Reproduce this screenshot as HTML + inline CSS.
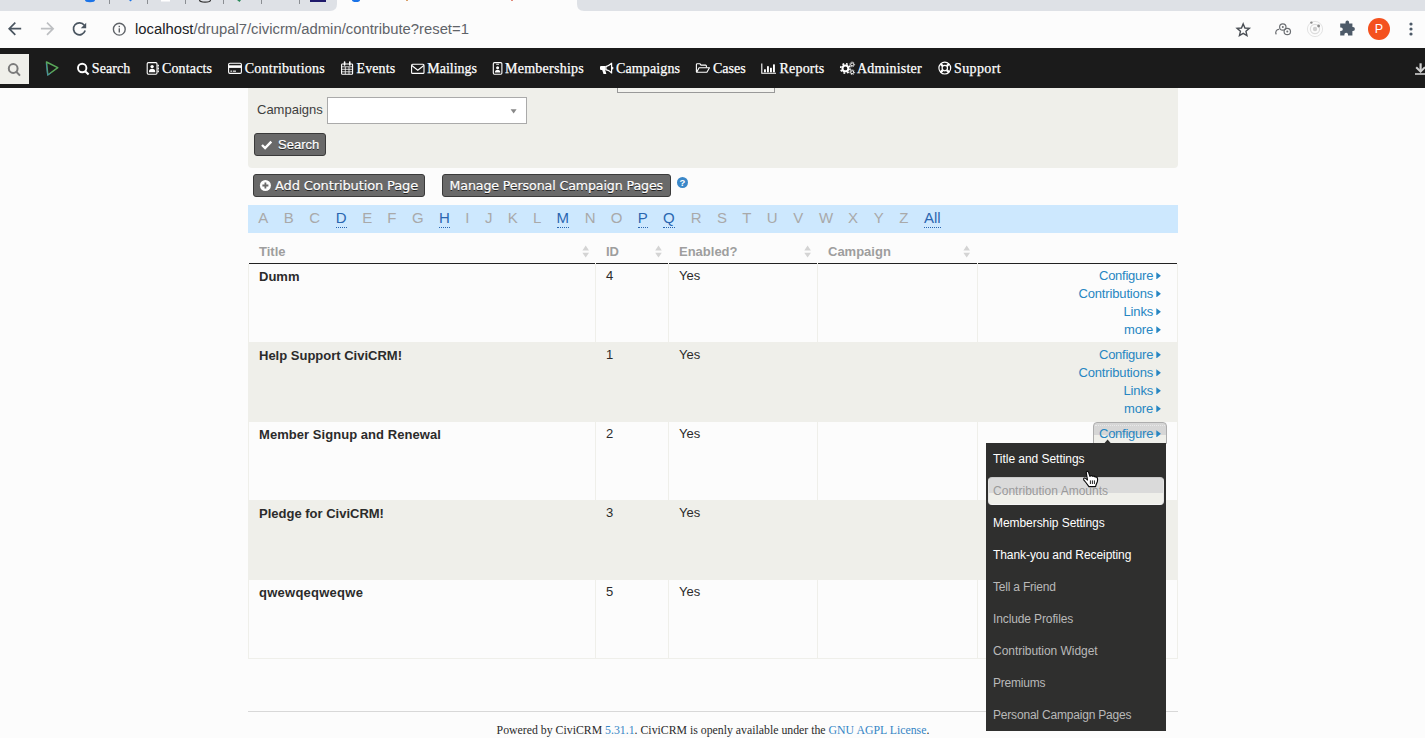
<!DOCTYPE html>
<html><head><meta charset="utf-8"><title>CiviCRM</title>
<style>
*{box-sizing:border-box;margin:0;padding:0}
html,body{width:1425px;height:738px;overflow:hidden;background:#fcfcfc;font-family:"Liberation Sans",sans-serif;}
.abs{position:absolute}
#tabs{left:0;top:0;width:1425px;height:11px;background:#dee1e6}
#tabact{left:337px;top:-10px;width:240px;height:21px;background:#fcfcfc;border-radius:8px 8px 0 0}
#url{left:135px;top:20px;font-size:14.82px;line-height:18px;color:#5f6368;white-space:nowrap}
#url b{font-weight:normal;color:#202124}
#nav{left:0;top:48px;width:1425px;height:40px;background:#1b1b1b}
#qs{left:0;top:54px;width:29px;height:30px;background:#efefea}
.ni{position:absolute;top:60px;font-family:"Liberation Serif",serif;font-size:14px;line-height:18px;color:#fff;white-space:nowrap;-webkit-text-stroke:0.25px #fff}
#panel{left:248px;top:88px;width:930px;height:80px;background:#efefea;border-radius:0 0 4px 4px}
#lbl{left:257px;top:101px;font-size:13px;line-height:17px;color:#3e3e3e}
#sel{left:327px;top:97px;width:200px;height:27px;background:#fff;border:1px solid #aaa}
.btn{-webkit-text-stroke:0.2px #fff;position:absolute;background:#696969;border:1px solid #3a3a3a;border-radius:3px;color:#fff;white-space:nowrap;text-shadow:0 1px 0 #222}
#bsearch{left:254px;top:133px;width:72px;height:23px;font-size:13px;line-height:21px;padding-left:23px}
#badd{left:253px;top:174px;width:172px;height:23px;font-family:"DejaVu Sans",sans-serif;font-size:13px;letter-spacing:-0.12px;line-height:21px;padding-left:21px}
#bman{left:442px;top:174px;width:229px;height:23px;font-family:"DejaVu Sans",sans-serif;font-size:12.6px;letter-spacing:-0.1px;line-height:21px;padding-left:6.5px}
#alpha{left:248px;top:205px;width:930px;height:28px;background:#cde8fe}
.al{position:absolute;top:209px;font-size:15px;line-height:18px;color:#a9a9a9}
.al.on{color:#2a66b0;border-bottom:1px dotted #2a66b0;}
.th{position:absolute;top:244px;font-size:13px;line-height:16px;font-weight:bold;color:#9e9e9e}
#tbl{left:248px;top:264px;width:930px;height:395px;background:#efefea}
.c{position:absolute;height:78px;background:#fcfcfc}
.tt{position:absolute;left:259px;font-size:13px;line-height:16px;font-weight:bold;color:#2b2b2b;white-space:nowrap}
.td{position:absolute;font-size:13px;line-height:16px;color:#2b2b2b}
.lk{position:absolute;font-size:13px;line-height:16px;color:#2786c2;text-align:right;right:264.1px;white-space:nowrap;letter-spacing:-0.15px}
.lk i{display:inline-block;width:4.6px;height:7.2px;background:#2786c2;clip-path:polygon(0 0,100% 50%,0 100%);margin-left:3.2px;margin-right:0;vertical-align:0.6px;letter-spacing:0}
#cfg{left:1093px;top:422px;width:74px;height:22px;border:1px solid #adadad;border-radius:4px 4px 0 0;background:linear-gradient(#d6d6d6 0,#d6d6d6 58%,#efefea 58%,#efefea 100%)}
#menu{left:986px;top:443px;width:180px;height:288px;background:#2f2f2e}
.mi{position:absolute;left:993px;font-size:12px;line-height:15px;color:#fff;white-space:nowrap}
.mi.d{color:#b9b9b9}
.mi.h{color:#9a9a9a}
#hov{left:988px;top:477px;width:176px;height:28px;border:1px solid;border-color:#c9c9c9 #e3e3e3 #f6f6f6 #e3e3e3;border-radius:4px;background:linear-gradient(#dadada 0,#dadada 57%,#efefea 57%,#efefea 100%)}
#foot{left:248px;top:711px;width:930px;height:1px;background:#d8d8d8}
#ftxt{left:248px;width:930px;top:723px;text-align:center;font-family:"Liberation Serif",serif;font-size:11.8px;line-height:15px;color:#2b2b2b}
#ftxt span{color:#3585c5}
</style></head><body>
<div id="tabs" class="abs"></div><div id="tabact" class="abs"></div>
<div id="url" class="abs"><b>localhost</b>/drupal7/civicrm/admin/contribute?reset=1</div>
<div id="nav" class="abs"></div>
<div id="qs" class="abs"></div>
<div class="ni" style="left:91.8px;letter-spacing:0.07px">Search</div>
<div class="ni" style="left:162.0px;letter-spacing:0.14px">Contacts</div>
<div class="ni" style="left:244.7px;letter-spacing:0.26px">Contributions</div>
<div class="ni" style="left:356.5px;letter-spacing:0.10px">Events</div>
<div class="ni" style="left:427.3px;letter-spacing:-0.01px">Mailings</div>
<div class="ni" style="left:505.0px;letter-spacing:0.26px">Memberships</div>
<div class="ni" style="left:616.0px;letter-spacing:0.13px">Campaigns</div>
<div class="ni" style="left:712.9px;letter-spacing:0.01px">Cases</div>
<div class="ni" style="left:779.6px;letter-spacing:0.18px">Reports</div>
<div class="ni" style="left:856.9px;letter-spacing:0.20px">Administer</div>
<div class="ni" style="left:954.0px;letter-spacing:0.39px">Support</div>

<div id="panel" class="abs"></div>
<div class="abs" style="left:617px;top:88px;width:158px;height:5px;border:1px solid #999;border-top:none;background:#f3f3ef"></div>
<div id="lbl" class="abs">Campaigns</div>
<div id="sel" class="abs"></div>
<div id="bsearch" class="btn">Search</div>
<div id="badd" class="btn">Add Contribution Page</div>
<div id="bman" class="btn">Manage Personal Campaign Pages</div>
<div id="alpha" class="abs"></div>
<span class="al" style="left:258.3px">A</span><span class="al" style="left:283.8px">B</span><span class="al" style="left:309.2px">C</span><span class="al on" style="left:335.8px">D</span><span class="al" style="left:362.3px">E</span><span class="al" style="left:387.3px">F</span><span class="al" style="left:411.9px">G</span><span class="al on" style="left:438.9px">H</span><span class="al" style="left:465.3px">I</span><span class="al" style="left:485.0px">J</span><span class="al" style="left:507.8px">K</span><span class="al" style="left:533.1px">L</span><span class="al on" style="left:556.5px">M</span><span class="al" style="left:584.7px">N</span><span class="al" style="left:610.8px">O</span><span class="al on" style="left:637.8px">P</span><span class="al on" style="left:663.1px">Q</span><span class="al" style="left:690.7px">R</span><span class="al" style="left:717.0px">S</span><span class="al" style="left:742.2px">T</span><span class="al" style="left:766.8px">U</span><span class="al" style="left:793.3px">V</span><span class="al" style="left:819.1px">W</span><span class="al" style="left:848.1px">X</span><span class="al" style="left:873.7px">Y</span><span class="al" style="left:899.2px">Z</span><span class="al on" style="left:924px">All</span>
<div class="th" style="left:259px">Title</div>
<div class="th" style="left:606px">ID</div>
<div class="th" style="left:679px">Enabled?</div>
<div class="th" style="left:828px">Campaign</div>
<div class="abs" style="left:249px;top:263px;width:928px;height:1px;background:#222"></div>
<div id="tbl" class="abs"></div>
<div class="abs" style="left:595px;top:263px;width:1px;height:1px;background:#f4f4f2"></div><div class="abs" style="left:668px;top:263px;width:1px;height:1px;background:#f4f4f2"></div><div class="abs" style="left:817px;top:263px;width:1px;height:1px;background:#f4f4f2"></div><div class="abs" style="left:977px;top:263px;width:1px;height:1px;background:#f4f4f2"></div>
<div class="c" style="left:249px;top:264px;width:346px"></div><div class="c" style="left:596px;top:264px;width:72px"></div><div class="c" style="left:669px;top:264px;width:148px"></div><div class="c" style="left:818px;top:264px;width:159px"></div><div class="c" style="left:978px;top:264px;width:199px"></div>
<div class="c" style="left:249px;top:422px;width:346px"></div><div class="c" style="left:596px;top:422px;width:72px"></div><div class="c" style="left:669px;top:422px;width:148px"></div><div class="c" style="left:818px;top:422px;width:159px"></div><div class="c" style="left:978px;top:422px;width:199px"></div>
<div class="c" style="left:249px;top:580px;width:346px"></div><div class="c" style="left:596px;top:580px;width:72px"></div><div class="c" style="left:669px;top:580px;width:148px"></div><div class="c" style="left:818px;top:580px;width:159px"></div><div class="c" style="left:978px;top:580px;width:199px"></div>

<div class="tt" style="top:269px;letter-spacing:0px">Dumm</div><div class="td" style="left:606px;top:268px">4</div><div class="td" style="left:679px;top:268px">Yes</div>
<div class="lk" style="top:268px;letter-spacing:-0.25px">Configure<i></i></div><div class="lk" style="top:286px">Contributions<i></i></div><div class="lk" style="top:304px">Links<i></i></div><div class="lk" style="top:322px">more<i></i></div>
<div class="tt" style="top:348px;letter-spacing:0px">Help Support CiviCRM!</div><div class="td" style="left:606px;top:347px">1</div><div class="td" style="left:679px;top:347px">Yes</div>
<div class="lk" style="top:347px;letter-spacing:-0.25px">Configure<i></i></div><div class="lk" style="top:365px">Contributions<i></i></div><div class="lk" style="top:383px">Links<i></i></div><div class="lk" style="top:401px">more<i></i></div>
<div class="tt" style="top:427px;letter-spacing:0.05px">Member Signup and Renewal</div><div class="td" style="left:606px;top:426px">2</div><div class="td" style="left:679px;top:426px">Yes</div>
<div class="tt" style="top:506px;letter-spacing:0px">Pledge for CiviCRM!</div><div class="td" style="left:606px;top:505px">3</div><div class="td" style="left:679px;top:505px">Yes</div>
<div class="tt" style="top:585px;letter-spacing:0.25px">qwewqeqweqwe</div><div class="td" style="left:606px;top:584px">5</div><div class="td" style="left:679px;top:584px">Yes</div>

<div id="foot" class="abs"></div>
<div id="cfg" class="abs"></div><div class="abs" style="left:1095px;top:425px;width:70px;height:0;border-top:1px dotted #e9e9e9"></div>
<div class="lk" style="top:426px;letter-spacing:-0.25px">Configure<i></i></div>
<div id="menu" class="abs"></div>
<div id="hov" class="abs"></div>
<div class="mi" style="top:452px;letter-spacing:-0.04px">Title and Settings</div>
<div class="mi h" style="top:484px;letter-spacing:0.02px">Contribution Amounts</div>
<div class="mi" style="top:516px;letter-spacing:-0.06px">Membership Settings</div>
<div class="mi" style="top:548px;letter-spacing:-0.075px">Thank-you and Receipting</div>
<div class="mi d" style="top:580px;letter-spacing:-0.21px">Tell a Friend</div>
<div class="mi d" style="top:612px;letter-spacing:-0.12px">Include Profiles</div>
<div class="mi d" style="top:644px;letter-spacing:-0.04px">Contribution Widget</div>
<div class="mi d" style="top:676px;letter-spacing:-0.2px">Premiums</div>
<div class="mi d" style="top:708px;letter-spacing:-0.19px">Personal Campaign Pages</div>

<div id="ftxt" class="abs">Powered by CiviCRM <span>5.31.1</span>. CiviCRM is openly available under the <span>GNU AGPL License</span>.</div>
<svg class="abs" style="left:0;top:0;pointer-events:none" width="1425" height="738" viewBox="0 0 1425 738">
<!-- tab strip bits -->
<path d="M330 11Q337 11 337 4V11zM584 11Q577 11 577 4V11z" fill="#fcfcfc"/>
<g stroke="#8b8e93" stroke-width="1"><path d="M109.5 0V4M147.5 0V4M185.5 0V4M223.5 0V4M261.5 0V4M299.5 0V4"/></g>
<path d="M85 0h10a5 2.2 0 0 1-10 0z" fill="#1a73e8"/>
<path d="M129 0h3l-1.5 1.5z" fill="#1a73e8"/>
<rect x="161" y="0" width="9" height="1.5" fill="#fff"/>
<path d="M199.5 0a5.5 2.2 0 0 0 11 0" fill="none" stroke="#333" stroke-width="1.2"/>
<path d="M237 0h4l-1.5 2z" fill="#2a8a5a"/>
<rect x="310" y="0" width="16" height="2" fill="#1f1a6b"/>
<path d="M352 0h8a4 2 0 0 1-8 0z" fill="#1a73e8"/>
<rect x="406" y="0" width="2" height="1" fill="#d9a06a"/><rect x="511" y="0" width="2" height="1" fill="#e28a7a"/>
<!-- toolbar -->
<g fill="none" stroke="#4a5560" stroke-width="1.7" stroke-linecap="butt" stroke-linejoin="miter">
<path d="M21.2 28.7H10M15.3 22.6L9.2 28.7L15.3 34.8"/>
<path d="M40.9 28.7H52.2M47 22.6L53.1 28.7L47 34.8" stroke="#bdbfc2"/>
<path d="M84.3 25.2A6 6 0 1 0 85.2 30.6" />
</g>
<path d="M86.2 22.8V28.2H80.8z" fill="#4a5560"/>
<circle cx="119.3" cy="29.2" r="5.9" fill="none" stroke="#5f6368" stroke-width="1.4"/>
<rect x="118.6" y="28.3" width="1.4" height="4.2" fill="#5f6368"/><rect x="118.6" y="25.8" width="1.4" height="1.4" fill="#5f6368"/>
<!-- star -->
<path d="M1243.2 23.9l1.75 4.1 4.4.4-3.4 2.9 1 4.3-3.75-2.3-3.75 2.3 1-4.3-3.4-2.9 4.4-.4z" fill="none" stroke="#4a4f55" stroke-width="1.4" stroke-linejoin="miter"/>
<!-- cloud ext -->
<g fill="none" stroke="#6b6e72" stroke-width="1.2">
<circle cx="1282.8" cy="27" r="3.2"/><circle cx="1287.3" cy="31.5" r="3.2"/><path d="M1276.3 34.3a3.2 3.2 0 0 1 2.8-5"/>
</g>
<circle cx="1282.8" cy="27" r="1" fill="#6b6e72"/><circle cx="1287.3" cy="31.5" r="1" fill="#6b6e72"/>
<!-- circle ext -->
<circle cx="1315" cy="29" r="7.6" fill="none" stroke="#dcdcdc" stroke-width="0.8"/>
<circle cx="1315" cy="29" r="4.6" fill="none" stroke="#dcdcdc" stroke-width="1.2"/>
<circle cx="1315" cy="29" r="2.2" fill="#d0d0d0"/>
<circle cx="1311.4" cy="22.6" r="1.2" fill="#8a8a8a"/><circle cx="1318.6" cy="26" r="1.4" fill="#8a8a8a"/>
<!-- puzzle -->
<path d="M1345.5 22.3a1.8 1.8 0 0 1 3.6 0v1.2h3.3v3.6h.6a1.9 1.9 0 0 1 0 3.8h-.6v4.6h-4.4v-.9a1.8 1.8 0 0 0-3.6 0v.9h-4.2v-4.4h.8a1.8 1.8 0 0 0 0-3.6h-.8v-4h5.3z" fill="#4d5a68"/>
<!-- avatar -->
<circle cx="1379" cy="29" r="11" fill="#f4511e"/>
<text x="1379" y="33.3" font-family="Liberation Sans, sans-serif" font-size="12.5" fill="#fff" text-anchor="middle">P</text>
<circle cx="1411" cy="24" r="1.6" fill="#4d5a68"/><circle cx="1411" cy="29" r="1.6" fill="#4d5a68"/><circle cx="1411" cy="34" r="1.6" fill="#4d5a68"/>
<!-- civicrm nav -->
<g fill="none" stroke="#7b7b7b" stroke-width="2"><circle cx="13.2" cy="68.5" r="4.4"/><path d="M16.3 71.8L20 75.6" stroke-linecap="butt"/></g>
<path d="M46.5 62L57.8 67.6L47.8 75z" fill="none" stroke="#5aa85a" stroke-width="1.5" stroke-linejoin="round"/>
<path d="M46.2 63.5L47.6 75.2L51 73" fill="none" stroke="#3f7fbf" stroke-width="0.9" opacity=".8"/>
<!-- download icon -->
<g stroke="#d0d0d0" fill="none"><path d="M1420.6 63.3V70" stroke-width="2.2"/><path d="M1416.2 67.2L1420.6 71.6L1425 67.2" stroke-width="2"/><path d="M1415 74H1425" stroke-width="1.6"/></g>
<!-- nav icons -->
<g fill="none" stroke="#fff">
<!-- search -->
<circle cx="82.2" cy="68" r="4.2" stroke-width="1.9"/><path d="M85.2 71.2L88.6 74.6" stroke-width="2.1"/>
<!-- contacts -->
<rect x="147.2" y="62.6" width="9.8" height="11.6" rx="1.2" stroke-width="1.1"/>
<path d="M158.2 64.8v1.8M158.2 67.6v1.8M158.2 70.4v1.8" stroke-width="1.4"/>
<!-- credit card -->
<rect x="228.6" y="63.2" width="12.8" height="10.2" rx="1.3" stroke-width="1.1"/>
<!-- calendar -->
<rect x="341.6" y="64" width="11" height="10.2" rx="0.8" stroke-width="1.1"/>
<path d="M341.6 66.8h11M345.3 66.8v7.4M349 66.8v7.4M341.6 69.3h11M341.6 71.8h11" stroke-width="0.8"/>
<path d="M344.6 62v3M349.8 62v3" stroke-width="1.6" stroke-linecap="round"/>
<!-- envelope -->
<rect x="411.6" y="64.2" width="12.4" height="9.2" rx="1" stroke-width="1.1"/>
<path d="M411.8 65.5L417.8 70.2L423.8 65.5" stroke-width="1.1"/>
<!-- id badge -->
<rect x="493.3" y="62.6" width="8.6" height="11.6" rx="1.2" stroke-width="1.1"/>
<path d="M496.2 64.3h2.8" stroke-width="0.9"/>
<!-- folder open -->
<path d="M696.4 72V64.6a.8.8 0 0 1 .8-.8h2.8l1 1.3h4.6a.8.8 0 0 1 .8.8v1.5" stroke-width="1.1"/>
<path d="M696.6 72.3l2.5-4.6h10.4l-2.6 4.6z" stroke-width="1.1" stroke-linejoin="round"/>
<!-- bar chart -->
<path d="M761.8 63.4V73.3H776" stroke-width="1.1"/>
<!-- life ring -->
<circle cx="944.8" cy="68.1" r="5.9" stroke-width="1.2"/><circle cx="944.8" cy="68.1" r="2.7" stroke-width="1.2"/>
<path d="M940.5 63.8l2.3 2.3M949.1 63.8l-2.3 2.3M940.5 72.4l2.3-2.3M949.1 72.4l-2.3-2.3" stroke-width="2.2"/>
</g>
<g fill="#fff">
<!-- contacts person -->
<circle cx="152.1" cy="66.6" r="1.7"/><path d="M148.9 72.2c0-2.4 1.3-3.4 3.2-3.4s3.2 1 3.2 3.4z"/>
<!-- card band -->
<rect x="228.6" y="65.3" width="12.8" height="2.6"/><rect x="230.4" y="70.6" width="1.8" height="1.1"/><rect x="233" y="70.6" width="3" height="1.1"/>
<!-- badge person -->
<circle cx="497.6" cy="67.8" r="1.5"/><path d="M494.9 72.6c0-2 1.1-2.9 2.7-2.9s2.7.9 2.7 2.9z"/>
<!-- bullhorn -->
<path d="M601 65.900h4.600v4.200h-4.600a1 1 0 0 1-1-1v-2.200a1 1 0 0 1 1-1z"/>
<path d="M602.200 70h3l1.200 4h-2.900z"/>
<path d="M605.400 65.900c2.300-.4 4.200-1.500 5.800-3.100h1v10.600h-1c-1.600-1.600-3.500-2.700-5.800-3.100zM606.600 66.900v2.400c1.600.4 3 1.100 4.400 2.200v-6.800c-1.400 1.100-2.800 1.800-4.400 2.200z" fill-rule="evenodd"/>
<rect x="612" y="66.800" width="1.300" height="2.600" rx=".6"/>
<!-- bars -->
<rect x="764" y="69.3" width="1.9" height="3"/><rect x="767" y="66.2" width="1.9" height="6.1"/><rect x="770" y="67.8" width="1.9" height="4.5"/><rect x="773" y="64.4" width="1.9" height="7.9"/>
</g>
<!-- gears -->
<g fill="none" stroke="#fff">
<circle cx="845.4" cy="68.4" r="2.9" stroke-width="2"/>
<circle cx="845.4" cy="68.4" r="4.7" stroke-width="1.6" stroke-dasharray="1.85 1.85"/>
<circle cx="852.2" cy="64.4" r="1.5" stroke-width="1"/><circle cx="852.2" cy="64.4" r="2.4" stroke-width="0.9" stroke-dasharray="0.95 0.95"/>
<circle cx="852.2" cy="72.2" r="1.5" stroke-width="1"/><circle cx="852.2" cy="72.2" r="2.4" stroke-width="0.9" stroke-dasharray="0.95 0.95"/>
</g>
<!-- select arrow -->
<path d="M510.6 109.2h6l-3 4.2z" fill="#888"/>
<!-- check -->
<path d="M262 145l3.1 3.1 6.2-6.4" fill="none" stroke="#fff" stroke-width="2.4"/>
<!-- plus circle -->
<circle cx="265.4" cy="185.5" r="5.5" fill="#fff"/><path d="M262.400 185.500h6M265.400 182.500v6" stroke="#696969" stroke-width="1.800"/>
<!-- help -->
<circle cx="682.5" cy="182.5" r="5.5" fill="#3a87c8"/>
<text x="682.5" y="186" font-family="Liberation Sans, sans-serif" font-weight="bold" font-size="9.5" fill="#fff" text-anchor="middle">?</text>
<!-- sort icons -->
<g fill="#d4d4d4">
<path d="M585.7 245.6l3.3 4.8h-6.6zM585.7 257.6l3.3-4.8h-6.6z"/>
<path d="M658.5 245.6l3.3 4.8h-6.6zM658.5 257.6l3.3-4.8h-6.6z"/>
<path d="M807.6 245.6l3.3 4.8h-6.6zM807.6 257.6l3.3-4.8h-6.6z"/>
<path d="M966.7 245.6l3.3 4.8h-6.6zM966.7 257.6l3.3-4.8h-6.6z"/>
</g>
<!-- menu pointer -->
<path d="M1104.6 443l3-3.4 3 3.4z" fill="#2f2f2e"/>
<!-- cursor hand -->
<g transform="translate(1083,471)">
<path d="M3.8 .5Q4.6 0 5.4 .8L6.9 5.4L7.9 4.7Q9 4.4 9.5 5.3L10.5 5.2Q11.6 5 12.1 5.9Q13.6 5.6 14.3 6.8Q14.9 8.5 14.4 10.5L13 14L12.6 15.6H5.9L2.9 11.5L.7 8.8Q.3 7.6 1.2 7.1Q2.2 6.7 3 7.6L4.5 9L3.3 2Q3.100 .9 3.800 .5Z" fill="#fff" stroke="#0a0a0a" stroke-width="1.15" stroke-linejoin="round"/>
<path d="M7.400 9.400V13M9.400 9.400V13M11.400 9.400V13" stroke="#0a0a0a" stroke-width=".9" fill="none"/>
</g>
</svg>

</body></html>
